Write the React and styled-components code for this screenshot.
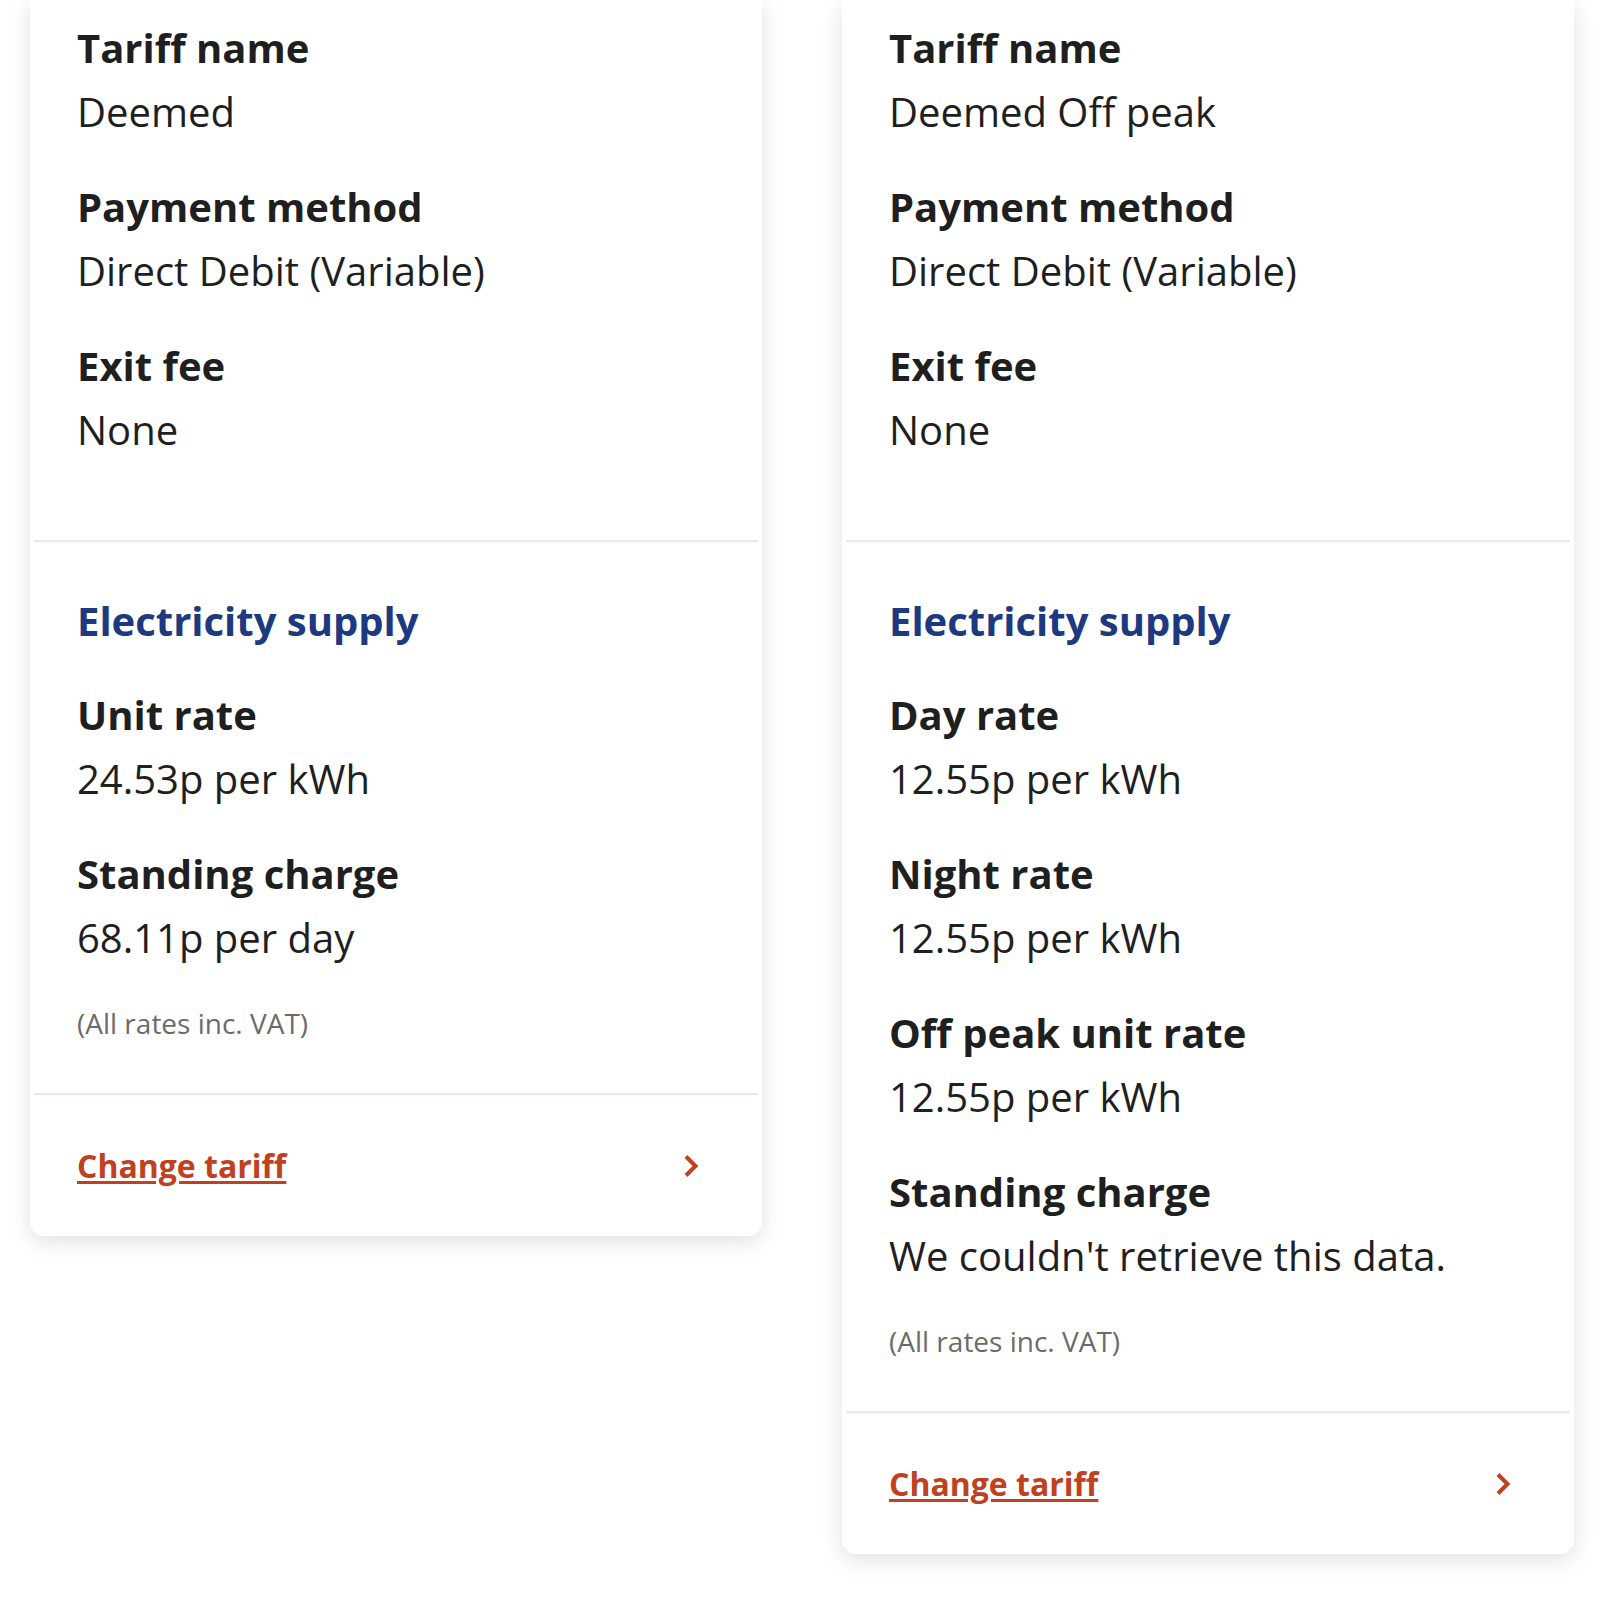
import styled, { createGlobalStyle } from "styled-components";

const GlobalStyle = createGlobalStyle`
  * {
    box-sizing: border-box;
  }

  body {
    margin: 0;
    background: #fff;
    font-family: "Open Sans", "Noto Sans", sans-serif;
    color: #1f1f1f;
  }
`;

const tariffs = [
  {
    id: "standard",
    name: "Deemed",
    rates: [
      { label: "Unit rate", value: "24.53p per kWh" },
      { label: "Standing charge", value: "68.11p per day" },
    ],
  },
  {
    id: "offpeak",
    name: "Deemed Off peak",
    rates: [
      { label: "Day rate", value: "12.55p per kWh" },
      { label: "Night rate", value: "12.55p per kWh" },
      { label: "Off peak unit rate", value: "12.55p per kWh" },
      { label: "Standing charge", value: "We couldn't retrieve this data." },
    ],
  },
];

function Chevron() {
  return (
    <ChevronIcon viewBox="0 0 16 24" aria-hidden="true">
      <path d="M3 2.5 L12.5 12 L3 21.5" />
    </ChevronIcon>
  );
}

function TariffCard({ tariff }) {
  return (
    <Card>
      <Section $top>
        <Field>
          <Label>Tariff name</Label>
          <Value>{tariff.name}</Value>
        </Field>
        <Field>
          <Label>Payment method</Label>
          <Value>Direct Debit (Variable)</Value>
        </Field>
        <Field>
          <Label>Exit fee</Label>
          <Value>None</Value>
        </Field>
      </Section>
      <Divider />
      <Section>
        <SectionTitle>Electricity supply</SectionTitle>
        {tariff.rates.map((rate) => (
          <Field key={rate.label}>
            <Label>{rate.label}</Label>
            <Value>{rate.value}</Value>
          </Field>
        ))}
        <Note>(All rates inc. VAT)</Note>
      </Section>
      <Divider />
      <Footer>
        <ChangeLink href="#">Change tariff</ChangeLink>
        <Chevron />
      </Footer>
    </Card>
  );
}

export default function App() {
  return (
    <>
      <GlobalStyle />
      <Page>
        {tariffs.map((t) => (
          <TariffCard key={t.id} tariff={t} />
        ))}
      </Page>
    </>
  );
}

const Page = styled.main`
  display: flex;
  align-items: flex-start;
  gap: 80px;
  padding: 0 26px 0 30px;
  min-height: 1605px;
`;

const Card = styled.article`
  width: 732px;
  background: #fff;
  border-radius: 0 0 14px 14px;
  box-shadow: 0 6px 22px rgba(0, 0, 0, 0.12);
`;

const Section = styled.section`
  display: flex;
  flex-direction: column;
  gap: 32px;
  padding: ${(p) => (p.$top ? "18px 49px 77px 47px" : "47px 49px 50px 47px")};
`;

const Field = styled.div`
  display: flex;
  flex-direction: column;
`;

const Label = styled.h4`
  margin: 0;
  font-size: 40px;
  line-height: 60px;
  font-weight: 700;
  color: #1f1f1f;
`;

const Value = styled.p`
  margin: 0;
  font-size: 40px;
  line-height: 67px;
  font-weight: 400;
  color: #1f1f1f;
`;

const SectionTitle = styled.h3`
  margin: 0;
  font-size: 40px;
  line-height: 64px;
  font-weight: 700;
  color: #1d3a80;
`;

const Note = styled.p`
  margin: 0;
  font-size: 28px;
  line-height: 40px;
  color: #6b6b6b;
`;

const Divider = styled.hr`
  margin: 0 4px;
  height: 2px;
  border: 0;
  background: #e9e9e9;
  box-shadow: 0 1px 2px rgba(0, 0, 0, 0.04);
`;

const Footer = styled.div`
  display: flex;
  align-items: center;
  justify-content: space-between;
  height: 141px;
  padding: 0 63px 0 47px;
`;

const ChangeLink = styled.a`
  font-size: 32px;
  line-height: 44px;
  font-weight: 700;
  color: #c0401f;
  text-decoration: underline;
  text-decoration-thickness: 3px;
  text-underline-offset: 3px;
`;

const ChevronIcon = styled.svg`
  width: 16px;
  height: 24px;
  fill: none;
  stroke: #c0401f;
  stroke-width: 4;
  stroke-linejoin: miter;
`;
